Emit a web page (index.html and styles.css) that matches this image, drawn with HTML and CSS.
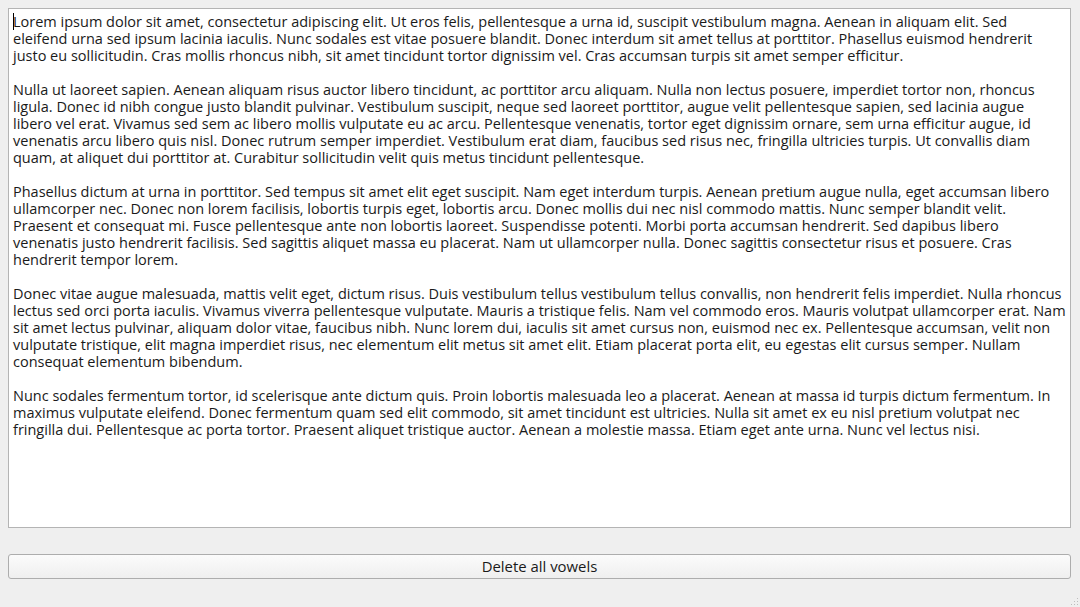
FILE: index.html
```html
<!DOCTYPE html>
<html>
<head>
<meta charset="utf-8">
<link rel="stylesheet" href="styles.css">
</head>
<body>
<div class="window">
  <div class="editor">
    <span class="caret"></span>
    <p class="para">
      <span class="line">Lorem ipsum dolor sit amet, consectetur adipiscing elit. Ut eros felis, pellentesque a urna id, suscipit vestibulum magna. Aenean in aliquam elit. Sed</span>
      <span class="line">eleifend urna sed ipsum lacinia iaculis. Nunc sodales est vitae posuere blandit. Donec interdum sit amet tellus at porttitor. Phasellus euismod hendrerit</span>
      <span class="line">justo eu sollicitudin. Cras mollis rhoncus nibh, sit amet tincidunt tortor dignissim vel. Cras accumsan turpis sit amet semper efficitur.</span>
    </p>
    <p class="para">
      <span class="line">Nulla ut laoreet sapien. Aenean aliquam risus auctor libero tincidunt, ac porttitor arcu aliquam. Nulla non lectus posuere, imperdiet tortor non, rhoncus</span>
      <span class="line">ligula. Donec id nibh congue justo blandit pulvinar. Vestibulum suscipit, neque sed laoreet porttitor, augue velit pellentesque sapien, sed lacinia augue</span>
      <span class="line">libero vel erat. Vivamus sed sem ac libero mollis vulputate eu ac arcu. Pellentesque venenatis, tortor eget dignissim ornare, sem urna efficitur augue, id</span>
      <span class="line">venenatis arcu libero quis nisl. Donec rutrum semper imperdiet. Vestibulum erat diam, faucibus sed risus nec, fringilla ultricies turpis. Ut convallis diam</span>
      <span class="line">quam, at aliquet dui porttitor at. Curabitur sollicitudin velit quis metus tincidunt pellentesque.</span>
    </p>
    <p class="para">
      <span class="line">Phasellus dictum at urna in porttitor. Sed tempus sit amet elit eget suscipit. Nam eget interdum turpis. Aenean pretium augue nulla, eget accumsan libero</span>
      <span class="line">ullamcorper nec. Donec non lorem facilisis, lobortis turpis eget, lobortis arcu. Donec mollis dui nec nisl commodo mattis. Nunc semper blandit velit.</span>
      <span class="line">Praesent et consequat mi. Fusce pellentesque ante non lobortis laoreet. Suspendisse potenti. Morbi porta accumsan hendrerit. Sed dapibus libero</span>
      <span class="line">venenatis justo hendrerit facilisis. Sed sagittis aliquet massa eu placerat. Nam ut ullamcorper nulla. Donec sagittis consectetur risus et posuere. Cras</span>
      <span class="line">hendrerit tempor lorem.</span>
    </p>
    <p class="para">
      <span class="line">Donec vitae augue malesuada, mattis velit eget, dictum risus. Duis vestibulum tellus vestibulum tellus convallis, non hendrerit felis imperdiet. Nulla rhoncus</span>
      <span class="line">lectus sed orci porta iaculis. Vivamus viverra pellentesque vulputate. Mauris a tristique felis. Nam vel commodo eros. Mauris volutpat ullamcorper erat. Nam</span>
      <span class="line">sit amet lectus pulvinar, aliquam dolor vitae, faucibus nibh. Nunc lorem dui, iaculis sit amet cursus non, euismod nec ex. Pellentesque accumsan, velit non</span>
      <span class="line">vulputate tristique, elit magna imperdiet risus, nec elementum elit metus sit amet elit. Etiam placerat porta elit, eu egestas elit cursus semper. Nullam</span>
      <span class="line">consequat elementum bibendum.</span>
    </p>
    <p class="para">
      <span class="line">Nunc sodales fermentum tortor, id scelerisque ante dictum quis. Proin lobortis malesuada leo a placerat. Aenean at massa id turpis dictum fermentum. In</span>
      <span class="line">maximus vulputate eleifend. Donec fermentum quam sed elit commodo, sit amet tincidunt est ultricies. Nulla sit amet ex eu nisl pretium volutpat nec</span>
      <span class="line">fringilla dui. Pellentesque ac porta tortor. Praesent aliquet tristique auctor. Aenean a molestie massa. Etiam eget ante urna. Nunc vel lectus nisi.</span>
    </p>
  </div>
  <button class="action">Delete all vowels</button>
  <svg class="grip" width="9" height="9" viewBox="0 0 9 9">
    <rect x="7" y="1" width="1" height="1" fill="#bdbdbd"/>
    <rect x="4" y="4" width="1" height="1" fill="#bdbdbd"/>
    <rect x="7" y="4" width="1" height="1" fill="#bdbdbd"/>
    <rect x="1" y="7" width="1" height="1" fill="#bdbdbd"/>
    <rect x="4" y="7" width="1" height="1" fill="#bdbdbd"/>
    <rect x="7" y="7" width="1" height="1" fill="#bdbdbd"/>
  </svg>
</div>
</body>
</html>
```
FILE: styles.css
```css
html, body {
  margin: 0;
  padding: 0;
  background: #efefef;
}
body {
  width: 1080px;
  height: 607px;
  overflow: hidden;
  font-family: "Open Sans", "Noto Sans", sans-serif;
  color: #1a1a1a;
}
.window {
  position: relative;
  display: flex;
  flex-direction: column;
  padding: 8px 9px 0 8px;
  height: 607px;
  box-sizing: border-box;
}
.editor {
  position: relative;
  height: 520px;
  box-sizing: border-box;
  background: #ffffff;
  border: 1px solid #b4b4b4;
  padding: 4px 4px 0 4px;
  font-size: 14.5px;
  line-height: 17px;
}
.caret {
  position: absolute;
  left: 4px;
  top: 4px;
  width: 1px;
  height: 17px;
  background: #000;
}
.para {
  margin: 0 0 17px 0;
  display: flex;
  flex-direction: column;
}
.line {
  white-space: nowrap;
}
.action {
  margin-top: 26px;
  height: 25px;
  box-sizing: border-box;
  border: 1px solid #adadad;
  border-radius: 3px;
  background: linear-gradient(#fbfbfb, #efefef);
  font-family: "Open Sans", "Noto Sans", sans-serif;
  font-size: 14.9px;
  line-height: 18px;
  color: #1a1a1a;
  padding: 0 0 2px 0;
}
.grip {
  position: absolute;
  right: 1px;
  bottom: 1px;
}
```
